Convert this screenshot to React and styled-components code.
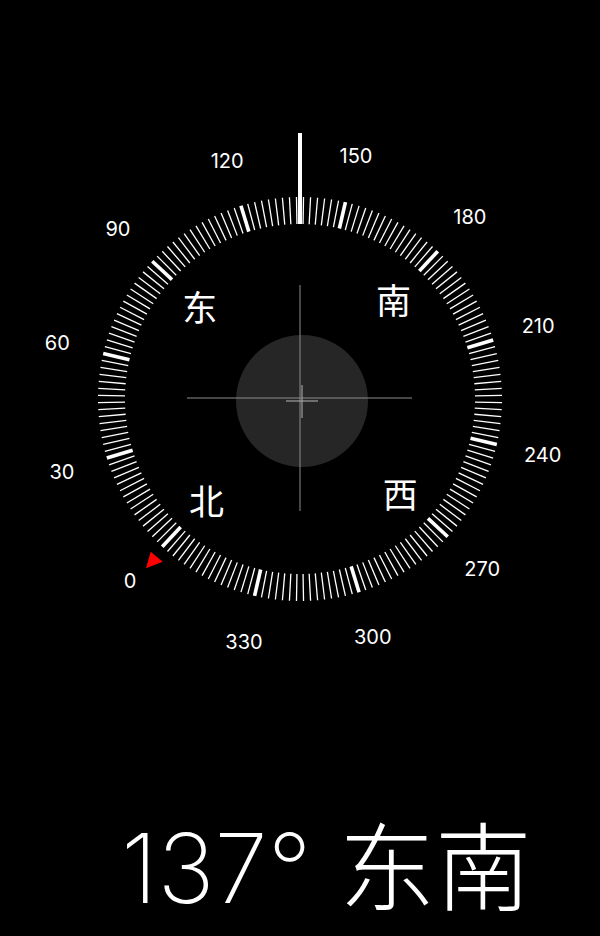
import styled, { createGlobalStyle } from "styled-components"

const HEADING = 137
const CX = 300
const CY = 399

const GlobalStyle = createGlobalStyle`
    html, body {
        margin: 0;
        padding: 0;
        background-color: #000000;
    }
`

// screen position of a dial degree, rotated so the heading sits at the top
function polar(deg, r) {
    const a = ((deg - HEADING) * Math.PI) / 180
    return [CX + r * Math.sin(a), CY - r * Math.cos(a)]
}

const ticks = []
for (let d = 0; d < 360; d += 2) {
    ticks.push(d)
}

const numbers = [0, 30, 60, 90, 120, 150, 180, 210, 240, 270, 300, 330]
const cardinals = [
    { deg: 0, name: "北" },
    { deg: 90, name: "东" },
    { deg: 180, name: "南" },
    { deg: 270, name: "西" },
]

export default function App() {
    return (
        <>
            <GlobalStyle />
            <Screen>
                <Dial viewBox="0 0 600 790" width="600" height="790">
                    {ticks.map(d => {
                        const major = d % 30 === 0
                        const [x1, y1] = polar(d, 175)
                        const [x2, y2] = polar(d, 202)
                        return (
                            <Tick key={d} x1={x1} y1={y1} x2={x2} y2={y2} $major={major} />
                        )
                    })}

                    <HeadingMark x1={CX} y1={133} x2={CX} y2={224} />

                    {numbers.map(n => {
                        const [x, y] = polar(n, 249)
                        return (
                            <Number key={n} x={x} y={y}>{n}</Number>
                        )
                    })}

                    {cardinals.map(c => {
                        const [x, y] = polar(c.deg, 137)
                        return (
                            <Cardinal key={c.name} x={x} y={y}>{c.name}</Cardinal>
                        )
                    })}

                    <NorthMarker points="150.7,551.7 162.7,561.7 146,568.3" />

                    <Bubble cx={302} cy={401} r={66} />
                    <Crosshair x1={187} y1={398} x2={412} y2={398} />
                    <Crosshair x1={300} y1={285} x2={300} y2={511} />
                    <LevelCross x1={286} y1={401} x2={318} y2={401} />
                    <LevelCross x1={302} y1={385} x2={302} y2={418} />
                </Dial>

                <Heading>
                    <Degrees>{HEADING}°</Degrees>
                    <Direction>东南</Direction>
                </Heading>
            </Screen>
        </>
    )
}

const Screen = styled.div`
    width: 600px;
    height: 936px;
    background-color: #000000;
    display: flex;
    flex-direction: column;
`

const Dial = styled.svg`
    display: block;
    flex-shrink: 0;
`

const Tick = styled.line`
    stroke: #ffffff;
    stroke-width: ${(props) => props.$major ? 3.6 : 1.3};
`

const HeadingMark = styled.line`
    stroke: #ffffff;
    stroke-width: 4;
`

const Number = styled.text`
    fill: #ffffff;
    font-family: Inter, "Liberation Sans", sans-serif;
    font-size: 20px;
    text-anchor: middle;
    dominant-baseline: central;
`

const Cardinal = styled.text`
    fill: #ffffff;
    font-family: "Noto Sans CJK SC", sans-serif;
    font-size: 35px;
    text-anchor: middle;
    dominant-baseline: central;
`

const NorthMarker = styled.polygon`
    fill: #ff0000;
`

const Bubble = styled.circle`
    fill: #262626;
`

const Crosshair = styled.line`
    stroke: #8c8c8c;
    stroke-width: 1;
`

const LevelCross = styled.line`
    stroke: #a0a0a0;
    stroke-width: 1.2;
`

const Heading = styled.div`
    display: flex;
    align-items: baseline;
    padding-left: 121px;
    margin-top: 24px;
    color: #ffffff;
    font-size: 96px;
    line-height: 1;
`

const Degrees = styled.span`
    font-family: Inter, "Liberation Sans", sans-serif;
    font-weight: 200;
`

const Direction = styled.span`
    font-family: "Noto Sans CJK SC", sans-serif;
    font-weight: 200;
    margin-left: 28px;
`
